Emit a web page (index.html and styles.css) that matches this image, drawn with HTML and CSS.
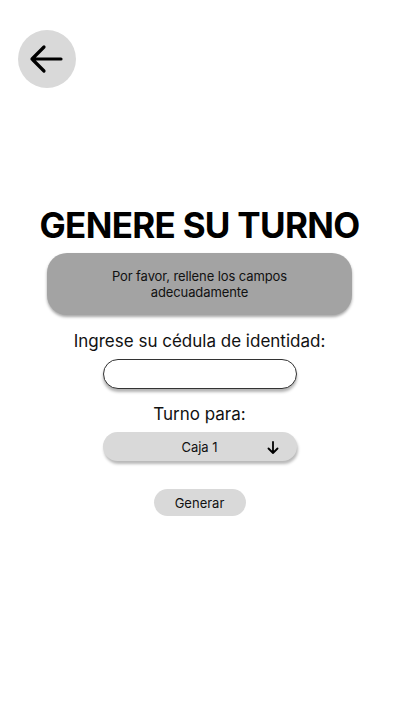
FILE: index.html
```html
<!DOCTYPE html>
<html lang="es">
<head>
<meta charset="utf-8">
<title>Genere su turno</title>
<link rel="stylesheet" href="styles.css">
</head>
<body>
<div class="screen">
  <header class="top">
    <button class="back" aria-label="Volver">
      <svg width="36" height="30" viewBox="0 0 36 30" fill="none" stroke="#000" stroke-width="3.2" stroke-linecap="round" stroke-linejoin="round">
        <path d="M33 15H4M16 3L4 15l12 12"/>
      </svg>
    </button>
  </header>
  <main class="content">
    <h1 class="title">GENERE SU TURNO</h1>
    <div class="notice">Por favor, rellene los campos<br>adecuadamente</div>
    <label class="label label-id" for="cedula">Ingrese su cédula de identidad:</label>
    <input class="field" id="cedula" type="text">
    <div class="label label-turno">Turno para:</div>
    <div class="select">
      <span class="select-text">Caja 1</span>
      <svg class="select-arrow" width="12" height="13" viewBox="0 0 12 13" fill="none" stroke="#000" stroke-width="1.8" stroke-linecap="round" stroke-linejoin="round">
        <path d="M6 1v11M1.5 7.5L6 12l4.5-4.5"/>
      </svg>
    </div>
    <button class="generate">Generar</button>
  </main>
</div>
</body>
</html>
```
FILE: styles.css
```css
* { box-sizing: border-box; }
html, body { margin: 0; padding: 0; background: #fff; }
body {
  font-family: Inter, "Noto Sans", sans-serif;
  color: #111;
  width: 402px;
  height: 715px;
  overflow: hidden;
}
.screen { display: flex; flex-direction: column; padding-right: 3px; }
.top { padding: 30px 0 0 18px; }
.back {
  width: 58px; height: 58px;
  border-radius: 50%;
  border: none;
  background: #d9d9d9;
  display: flex; align-items: center; justify-content: center;
  padding: 0 2px 0 0;
  cursor: pointer;
}
.content {
  display: flex; flex-direction: column; align-items: center;
  margin-top: 115px;
}
.title {
  margin: 0;
  font-size: 35px;
  font-weight: 700;
  line-height: 44px;
  color: #000;
  letter-spacing: -0.7px;
}
.notice {
  margin-top: 6px;
  width: 305px;
  height: 62px;
  background: #a3a3a3;
  border-radius: 20px;
  box-shadow: 0 2px 3px rgba(0,0,0,0.35);
  font-size: 13px;
  line-height: 16px;
  text-align: center;
  padding-top: 15px;
  color: #111;
  letter-spacing: -0.1px;
}
.label {
  font-size: 17px;
  line-height: 21px;
  color: #111;
}
.label-id { margin-top: 16px; }
.field {
  margin-top: 7px;
  width: 194px; height: 30px;
  border: 1px solid #333;
  border-radius: 15px;
  background: #fff;
  box-shadow: 0 3px 3px rgba(0,0,0,0.3);
  outline: none;
}
.label-turno { margin-top: 15px; }
.select {
  margin-top: 7px;
  width: 194px; height: 29px;
  border-radius: 15px;
  background: #d9d9d9;
  box-shadow: 1px 3px 3px rgba(0,0,0,0.28);
  position: relative;
  display: flex; align-items: center; justify-content: center;
  font-size: 13px;
}
.select-arrow { position: absolute; right: 18px; top: 9px; }
.generate {
  margin-top: 28px;
  width: 92px; height: 27px;
  border: none;
  border-radius: 14px;
  background: #d9d9d9;
  font-family: inherit;
  font-size: 13px;
  color: #111;
  padding: 0;
}
```
